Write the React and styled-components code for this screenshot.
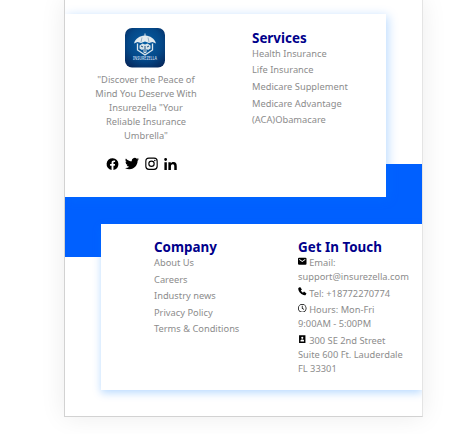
import React from "react";
import styled, { createGlobalStyle } from "styled-components";

const GlobalStyle = createGlobalStyle`
  body { margin: 0; background: #fff; overflow: hidden; }
  *, *::before, *::after { box-sizing: border-box; }
`;

const Page = styled.div`
  width: 474px;
  height: 434px;
  overflow: hidden;
  padding-left: 64px;
  background: #fff;
  font-family: "Noto Sans", sans-serif;
  font-size: 9.3px;
  line-height: 13.95px;
  color: #8c8c8c;
`;

const Frame = styled.div`
  width: 359px;
  height: 417px;
  border: 1px solid #d2d2d2;
  border-top: 0;
  border-right-color: #e4e4e4;
  background: #fff;
  box-shadow: 0 0 24px rgba(0, 0, 0, 0.08);
`;

const Footer = styled.footer`
  display: grid;
  grid-template-columns: 36px 285px 36px;
  grid-template-rows: 14px 150px 33px 27px 33px 133px 26px;
  height: 416px;
  overflow: hidden;
`;

const Band = styled.div`
  grid-area: 3 / 1 / 6 / 4;
  background: #0060ff;
`;

const Card = styled.section`
  display: flex;
  grid-area: ${(p) => p.$area};
  padding: ${(p) => p.$padding};
  gap: ${(p) => p.$gap};
  background: #fff;
  box-shadow: ${(p) => p.$shadow};
`;

const Column = styled.div`
  width: ${(p) => p.$width};
  padding-top: ${(p) => p.$offset || "0"};
  flex: none;
`;

const Brand = styled(Column)`
  display: flex;
  flex-direction: column;
  align-items: center;
  text-align: center;
`;

const Slogan = styled.p`
  margin: 5px 0 14px;
  padding-left: 1px;
  white-space: nowrap;
`;

const Social = styled.div`
  display: flex;
  gap: 6px;
  margin-left: -9px;
`;

const Title = styled.h2`
  margin: 0;
  font-size: 13.4px;
  line-height: 18px;
  font-weight: 700;
  color: #00008b;
`;

const Item = styled.p`
  margin: 0 0 2.65px;
  white-space: nowrap;
`;

const Glyph = styled.svg`
  display: block;
  width: ${(p) => p.$size}px;
  height: ${(p) => p.$size}px;
  fill: #000;
`;

const InlineGlyph = styled(Glyph)`
  display: inline-block;
  vertical-align: 0.7px;
  margin: -2px 2.7px 0 0;
`;

const LogoArt = styled.svg`
  display: block;
  width: 40px;
  height: 40px;
  flex: none;
  margin-left: -0.4px;
`;

const Logo = () => (
  <LogoArt viewBox="0 0 40 40">
    <defs>
      <radialGradient id="tile" cx="50%" cy="40%" r="70%">
        <stop offset="0" stopColor="#075fa5" />
        <stop offset="0.6" stopColor="#044888" />
        <stop offset="1" stopColor="#06285c" />
      </radialGradient>
    </defs>
    <rect width="40" height="39.500" rx="7" fill="url(#tile)" />
    <path d="M9 15.500C10.500 10 15 8 19.500 7.500V5.500h1v2C25 8 29.500 10 31 15.500L27.500 14 24 15 20 13.500 16 15 12.500 14Z" fill="#e3ebef" />
    <path d="M17 9.500 16 14M23 9.500 24 14" stroke="#6288a8" strokeWidth=".6" />
    <path d="M12.500 15.500V22L20 27 27.500 22V15.500" fill="none" stroke="#dce7ed" strokeWidth="1.300" />
    <path d="M14.500 17.500 17.500 15.500 20 16.500 22.500 15.500 25.500 17.500V20.500L23 22 21.500 21V24.500L20 25.500 18.500 24.500V21L17 22 14.500 20.500Z" fill="#d6e2e9" />
    <path d="M16 18 18 19M24 18 22 19M20 18v6" stroke="#0b3e70" strokeWidth=".9" />
    <text x="20" y="32" textAnchor="middle" fontSize="4.400" fontWeight="600" fill="#c5daec" textLength="24" lengthAdjust="spacingAndGlyphs">INSUREZELLA</text>
  </LogoArt>
);

const icons = {
  facebook: "M22 12a10 10 0 1 0-11.600 9.900v-7H7.900V12h2.500V9.800c0-2.500 1.500-3.900 3.800-3.900 1.100 0 2.200.2 2.200.2v2.500h-1.200c-1.200 0-1.600.8-1.600 1.500V12h2.700l-.4 2.900h-2.300v7A10 10 0 0 0 22 12Z",
  twitter: "M23.950 4.570a10 10 0 0 1-2.820.77 4.960 4.960 0 0 0 2.160-2.720c-.95.56-2 .96-3.130 1.180a4.920 4.920 0 0 0-8.380 4.480C7.690 8.090 4.070 6.130 1.640 3.160a4.920 4.920 0 0 0 1.520 6.570 4.900 4.900 0 0 1-2.230-.61v.06a4.920 4.920 0 0 0 3.950 4.830 5 5 0 0 1-2.210.08 4.940 4.940 0 0 0 4.600 3.420A9.870 9.870 0 0 1 0 19.540a13.990 13.990 0 0 0 7.560 2.210c9.050 0 14-7.500 14-13.980 0-.21 0-.42-.02-.63a9.940 9.940 0 0 0 2.460-2.550Z",
  instagram: "M7 0h10a7 7 0 0 1 7 7v10a7 7 0 0 1-7 7H7a7 7 0 0 1-7-7V7a7 7 0 0 1 7-7Zm0 2.200A4.800 4.800 0 0 0 2.200 7v10A4.800 4.800 0 0 0 7 21.800h10a4.800 4.800 0 0 0 4.800-4.800V7A4.800 4.800 0 0 0 17 2.200ZM12 5.800a6.200 6.200 0 1 1 0 12.400 6.200 6.200 0 0 1 0-12.400ZM12 8a4 4 0 1 0 0 8 4 4 0 0 0 0-8Zm6.400-3.900a1.500 1.500 0 1 1 0 3 1.500 1.500 0 0 1 0-3Z",
  linkedin: "M.5 8h4.600v15H.5ZM2.800 0a2.700 2.700 0 1 1 0 5.400 2.700 2.700 0 0 1 0-5.400ZM8 8h4.600v2.100c.8-1.400 2.400-2.500 4.900-2.500 5 0 6.300 3.200 6.300 7.600V23h-4.700v-7c0-2-.2-4.200-2.900-4.200-2.700 0-3.400 2-3.400 4.200v7H8Z",
  mail: "M3 2h18a3 3 0 0 1 3 3v14a3 3 0 0 1-3 3H3a3 3 0 0 1-3-3V5a3 3 0 0 1 3-3Zm9 12 9-6.500-1.200-1.700L12 11.400 4.200 5.800 3 7.500Z",
  phone: "M1 3 6 0l5 7-3 3c1.500 3 3.500 5 6 6l3-3 7 5-3 5C12 25-1 13 1 3Z",
  clock: "M12 0a12 12 0 1 1 0 24 12 12 0 0 1 0-24Zm0 2.200a9.800 9.800 0 1 0 0 19.600 9.800 9.800 0 0 0 0-19.600ZM10.800 5H13v6.500l4.500 3-1.200 1.800-5.500-3.700Z",
  contact: "M3 1h18v22H3ZM12 5a3 3 0 1 0 0 6 3 3 0 0 0 0-6Zm-5 13h10v-2c0-4-10-4-10 0Z",
};

const social = [
  { name: "facebook", size: 13, box: "1 0 22 22" },
  { name: "twitter", size: 14, box: "0 .8 24 24" },
  { name: "instagram", size: 13, box: "-.5 -1 25 25" },
  { name: "linkedin", size: 13, box: "0 -2 24 24.500" },
];

const ContactIcon = ({ name }) => (
  <InlineGlyph $size={8.5} viewBox="0 0 24 24">
    <path fillRule="evenodd" d={icons[name]} />
  </InlineGlyph>
);

const Links = ({ title, items, width, offset }) => (
  <Column $width={width} $offset={offset}>
    <Title>{title}</Title>
    {items.map((item) => <Item key={item}>{item}</Item>)}
  </Column>
);

export default function App() {
  return (
    <>
      <GlobalStyle />
      <Page>
        <Frame>
          <Footer>
            <Band />
            <Card $area="2 / 1 / 4 / 3" $padding="14px 0 0 27px" $gap="53px" $shadow="2px 2px 10px rgba(0, 123, 255, 0.27)">
              <Brand $width="107px">
                <Logo />
                <Slogan>
                  "Discover the Peace of<br />Mind You Deserve With<br />Insurezella "Your<br />Reliable Insurance<br />Umbrella"
                </Slogan>
                <Social>
                  {social.map(({ name, size, box }) => (
                    <Glyph key={name} $size={size} viewBox={box}><path d={icons[name]} /></Glyph>
                  ))}
                </Social>
              </Brand>
              <Links
                width="120px"
                offset="0.9px"
                title="Services"
                items={["Health Insurance", "Life Insurance", "Medicare Supplement", "Medicare Advantage", "(ACA)Obamacare"]}
              />
            </Card>
            <Card $area="5 / 2 / 7 / 4" $padding="14px 0 0 53px" $gap="24px" $shadow="0 3px 8px rgba(0, 123, 255, 0.27)">
              <Links
                width="120px"
                title="Company"
                items={["About Us", "Careers", "Industry news", "Privacy Policy", "Terms & Conditions"]}
              />
              <Column $width="120px">
                <Title>Get In Touch</Title>
                <Item><ContactIcon name="mail" />Email:<br />support@insurezella.com</Item>
                <Item><ContactIcon name="phone" />Tel: +18772270774</Item>
                <Item><ContactIcon name="clock" />Hours: Mon-Fri<br />9:00AM - 5:00PM</Item>
                <Item><ContactIcon name="contact" />300 SE 2nd Street<br />Suite 600 Ft. Lauderdale<br />FL 33301</Item>
              </Column>
            </Card>
          </Footer>
        </Frame>
      </Page>
    </>
  );
}
